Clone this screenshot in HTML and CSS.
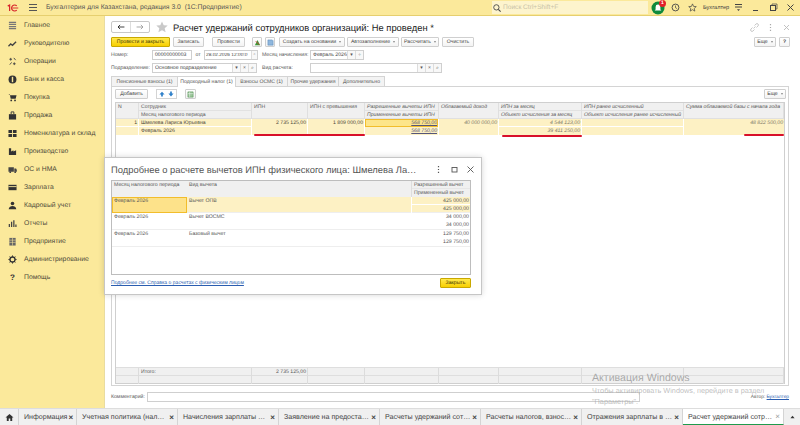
FILE: index.html
```html
<!DOCTYPE html>
<html lang="ru">
<head>
<meta charset="utf-8">
<title>Расчет удержаний сотрудников организаций</title>
<link rel="stylesheet" href="styles.css">
</head>
<body>
<div class="app">
  <header class="topbar">
    <svg class="logo" viewBox="0 0 20 12"><path d="M1 3.5 3.5 2V10" fill="none" stroke="#d8232a" stroke-width="1.6"/><path d="M13 3.2A4 4 0 1 0 13 8.8" fill="none" stroke="#d8232a" stroke-width="1.6"/><path d="M7 6H15" stroke="#d8232a" stroke-width="1.2"/></svg>
    <svg class="burger" viewBox="0 0 8 7"><path d="M0 .5H8M0 3.5H8M0 6.5H8" stroke="#555" stroke-width="1"/></svg>
    <div class="apptitle">Бухгалтерия для Казахстана, редакция 3.0  (1С:Предприятие)</div>
    <div class="search">
      <svg class="search-ico" viewBox="0 0 9 9"><circle cx="3.8" cy="3.8" r="3" fill="none" stroke="#444" stroke-width="1"/><path d="M6 6 8.6 8.6" stroke="#444" stroke-width="1.2"/></svg>
      <span>Поиск Ctrl+Shift+F</span>
    </div>
    <div class="bell">
      <svg viewBox="0 0 14 14"><circle cx="7" cy="7" r="6.5" fill="#0f8a3c"/><path d="M7 3.5a2.4 2.4 0 0 1 2.4 2.4V8.5l1 1H3.6l1-1V5.9A2.4 2.4 0 0 1 7 3.5Z" fill="#fff"/></svg>
      <span class="badge">1</span>
    </div>
    <svg class="tico hist" viewBox="0 0 10 10"><circle cx="5" cy="5" r="3.8" fill="none" stroke="#444"/><path d="M5 2.8V5.2L6.6 6.2" fill="none" stroke="#444" stroke-width=".8"/></svg>
    <svg class="tico star" viewBox="0 0 10 10"><path d="M5 1 6.2 3.8 9.2 4 6.9 6 7.6 9 5 7.4 2.4 9 3.1 6 .8 4 3.8 3.8Z" fill="none" stroke="#444" stroke-width=".8"/></svg>
    <div class="user">Бухгалтер</div>
    <svg class="tico menu" viewBox="0 0 9 9"><path d="M1 1.5H8M1 4H8" stroke="#444"/><path d="M3 6.2H6L4.5 8Z" fill="#444"/></svg>
    <svg class="tico wmin" viewBox="0 0 9 9"><path d="M2 7.5H7" stroke="#444"/></svg>
    <svg class="tico wmax" viewBox="0 0 9 9"><rect x="1.5" y="2.5" width="5" height="5" fill="none" stroke="#444"/><path d="M3 2V1H8V6H7" fill="none" stroke="#444" stroke-width=".7"/></svg>
    <svg class="tico wclose" viewBox="0 0 9 9"><path d="M1.5 1.5 7.5 7.5M7.5 1.5 1.5 7.5" stroke="#444" stroke-width="1"/></svg>
  </header>

  <div class="middle">
    <nav class="sidebar">
      <div class="nav-item"><svg viewBox="0 0 10 10"><path d="M1 1.5H9M1 3.8H9M1 6.2H9M1 8.5H9" stroke="#777" stroke-width="1.5"/></svg><span>Главное</span></div>
      <div class="nav-item"><svg viewBox="0 0 10 10"><path d="M.5 8 3 5.5 5 7 9 3" fill="none" stroke="#444" stroke-width="1.5"/></svg><span>Руководителю</span></div>
      <div class="nav-item"><svg viewBox="0 0 10 10"><path d="M3 1V4M1.5 2.5H4.5M7 6V9M5.5 7.5H8.5M2 8.5 4 6M6.5 1 8.5 3.5" stroke="#444" stroke-width="1"/></svg><span>Операции</span></div>
      <div class="nav-item"><svg viewBox="0 0 10 10"><circle cx="5" cy="5" r="4.4" fill="#333"/><path d="M5 2V8" stroke="#fbe99b" stroke-width="1.6"/></svg><span>Банк и касса</span></div>
      <div class="nav-item"><svg viewBox="0 0 10 10"><path d="M.5 1.5H2L3 6.5H8.5L9.5 2.5H2.4Z" fill="#333"/><circle cx="3.6" cy="8.3" r="1" fill="#333"/><circle cx="7.8" cy="8.3" r="1" fill="#333"/></svg><span>Покупка</span></div>
      <div class="nav-item"><svg viewBox="0 0 10 10"><path d="M1 3.5H9V9.5H1Z" fill="#333"/><path d="M3.5 3.5V1H6.5V3.5" fill="none" stroke="#333"/></svg><span>Продажа</span></div>
      <div class="nav-item"><svg viewBox="0 0 10 10"><path d="M.5 1H4.5V4.5H.5ZM5.5 1H9.5V4.5H5.5ZM.5 5.5H4.5V9H.5ZM5.5 5.5H9.5V9H5.5Z" fill="#333"/></svg><span>Номенклатура и склад</span></div>
      <div class="nav-item"><svg viewBox="0 0 10 10"><path d="M1 9V1.5H3.5V5L6 3.5V5L9 3.5V9Z" fill="#333"/></svg><span>Производство</span></div>
      <div class="nav-item"><svg viewBox="0 0 10 10"><path d="M.5 2.5H6.5V7.5H.5ZM7 4H9L9.8 5.5V7.5H7Z" fill="#444"/><circle cx="2.5" cy="8" r="1" fill="#444"/><circle cx="8" cy="8" r="1" fill="#444"/></svg><span>ОС и НМА</span></div>
      <div class="nav-item"><svg viewBox="0 0 10 10"><path d="M.5 2H9.5V8H.5Z" fill="#333"/><path d="M.5 4H9.5" stroke="#fbe99b" stroke-width="1"/></svg><span>Зарплата</span></div>
      <div class="nav-item"><svg viewBox="0 0 10 10"><circle cx="5" cy="2.8" r="2" fill="#333"/><path d="M.8 9.3C1 6.5 3 5.5 5 5.5S9 6.5 9.2 9.3Z" fill="#333"/></svg><span>Кадровый учет</span></div>
      <div class="nav-item"><svg viewBox="0 0 10 10"><path d="M1.5 9V5.5M4 9V3M6.5 9V1.5M8.8 9V6" stroke="#444" stroke-width="1.4"/></svg><span>Отчеты</span></div>
      <div class="nav-item"><svg viewBox="0 0 10 10"><path d="M1.5 1H8.5V9.5H1.5Z" fill="#666"/><path d="M5 1V9.5M1.5 3.5H8.5M1.5 6H8.5" stroke="#fbe99b" stroke-width=".6"/></svg><span>Предприятие</span></div>
      <div class="nav-item"><svg viewBox="0 0 10 10"><circle cx="5" cy="5" r="2.8" fill="none" stroke="#333" stroke-width="1.5"/><path d="M5 .5V2M5 8V9.5M.5 5H2M8 5H9.5M1.8 1.8 2.9 2.9M7.1 7.1 8.2 8.2M8.2 1.8 7.1 2.9M2.9 7.1 1.8 8.2" stroke="#333" stroke-width="1.1"/></svg><span>Администрирование</span></div>
      <div class="nav-item"><span class="qmark">?</span><span>Помощь</span></div>
    </nav>

    <main class="main">
      <div class="docbar">
        <div class="navbtns">
          <button class="navbtn"><svg viewBox="0 0 9 7"><path d="M8.5 3.5H1M3.5 1 1 3.5 3.5 6" fill="none" stroke="#222" stroke-width="1"/></svg></button>
          <button class="navbtn"><svg viewBox="0 0 9 7"><path d="M.5 3.5H8M5.5 1 8 3.5 5.5 6" fill="none" stroke="#999" stroke-width="1"/></svg></button>
        </div>
        <svg class="bigstar" viewBox="0 0 12 12"><path d="M6 .5 7.7 4.2 11.7 4.6 8.7 7.3 9.6 11.3 6 9.2 2.4 11.3 3.3 7.3.3 4.6 4.3 4.2Z" fill="#c9c9c9"/></svg>
        <h1 class="doctitle">Расчет удержаний сотрудников организаций: Не проведен *</h1>
        <div class="docactions">
          <svg viewBox="0 0 9 9"><path d="M3.5 5.5 5.5 3.5M2.5 4.5 1 6a1.4 1.4 0 0 0 2 2L4.5 6.5M6.5 4.5 8 3A1.4 1.4 0 0 0 6 1L4.5 2.5" fill="none" stroke="#bbb" stroke-width=".8"/></svg>
          <svg viewBox="0 0 9 9"><path d="M4.5 1V2.2M4.5 3.9V5.1M4.5 6.8V8" stroke="#aaa" stroke-width="1.2"/></svg>
          <svg viewBox="0 0 9 9"><path d="M2 2 7 7M7 2 2 7" stroke="#bbb" stroke-width=".9"/></svg>
        </div>
      </div>

      <div class="toolbar">
        <button class="btn primary w-post">Провести и закрыть</button>
        <button class="btn w-save">Записать</button>
        <button class="btn w-run">Провести</button>
        <button class="btn icon"><svg viewBox="0 0 8 8"><path d="M1 7 4 1 7 7Z" fill="#3a9a3a"/><path d="M2 2.5 6 6.5" stroke="#d33" stroke-width="1"/></svg></button>
        <button class="btn icon"><svg viewBox="0 0 8 8"><path d="M1 1H6L7 2V7H1Z" fill="#8fb7dd" stroke="#4a7fb0" stroke-width=".5"/></svg></button>
        <button class="btn w-create">Создать на основании<i class="car"></i></button>
        <button class="btn w-auto">Автозаполнение<i class="car"></i></button>
        <button class="btn w-calc">Рассчитать<i class="car"></i></button>
        <button class="btn w-clear">Очистить</button>
        <div class="spacer"></div>
        <button class="btn w-more">Еще<i class="car"></i></button>
        <button class="btn w-help">?</button>
      </div>

      <div class="formrow">
        <label class="lbl w-l1">Номер:</label>
        <div class="inp w-num">00000000003</div>
        <label class="lbl w-ot">от</label>
        <div class="inp w-date"><span class="grow">28.02.2026 12:00:0</span><i class="seg">▫</i></div>
        <label class="lbl w-l2">Месяц начисления:</label>
        <div class="inp w-month"><span class="grow">Февраль 2026</span><i class="seg">▾</i><i class="seg">÷</i></div>
      </div>
      <div class="formrow">
        <label class="lbl w-l1">Подразделение:</label>
        <div class="inp w-dep"><span class="grow">Основное подразделение</span><i class="seg">▾</i><i class="seg">×</i><i class="seg">⌕</i></div>
        <label class="lbl w-l3">Вид расчета:</label>
        <div class="inp w-kind"><span class="grow"></span><i class="seg">▾</i><i class="seg">×</i><i class="seg">⌕</i></div>
      </div>

      <div class="tabs">
        <div class="tab t1">Пенсионные взносы (1)</div>
        <div class="tab t2 active">Подоходный налог (1)</div>
        <div class="tab t3">Взносы ОСМС (1)</div>
        <div class="tab t4">Прочие удержания</div>
        <div class="tab t5">Дополнительно</div>
      </div>

      <section class="panel">
        <div class="cmdbar">
          <button class="btn w-add">Добавить</button>
          <div class="updown">
            <svg viewBox="0 0 7 7"><path d="M3.5 1 6.5 4H4.5V6.5H2.5V4H.5Z" fill="#2d7fc9"/></svg>
            <svg viewBox="0 0 7 7"><path d="M3.5 6.5 6.5 3H4.5V.5H2.5V3H.5Z" fill="#2d7fc9"/></svg>
          </div>
          <button class="btn icon xl"><svg viewBox="0 0 8 8"><path d="M1 1H7V7H1Z" fill="#9bc59b" stroke="#4f8f4f" stroke-width=".6"/><path d="M3 1V7M1 3H7" stroke="#fff" stroke-width=".5"/></svg></button>
          <div class="spacer"></div>
          <button class="btn w-more2">Еще<i class="car"></i></button>
        </div>

        <div class="table">
          <div class="tr thead">
            <div class="td"><div class="ln">N</div><div class="ln"></div></div>
            <div class="td"><div class="ln">Сотрудник</div><div class="ln">Месяц налогового периода</div></div>
            <div class="td"><div class="ln">ИПН</div><div class="ln"></div></div>
            <div class="td"><div class="ln">ИПН с превышения</div><div class="ln"></div></div>
            <div class="td it"><div class="ln">Разрешенные вычеты ИПН</div><div class="ln">Примененные вычеты ИПН</div></div>
            <div class="td it"><div class="ln">Облагаемый доход</div><div class="ln"></div></div>
            <div class="td it"><div class="ln">ИПН за месяц</div><div class="ln">Объект исчисления за месяц</div></div>
            <div class="td it"><div class="ln">ИПН ранее исчисленный</div><div class="ln">Объект исчисления ранее исчисленный</div></div>
            <div class="td it"><div class="ln">Сумма облагаемой базы с начала года</div><div class="ln"></div></div>
          </div>
          <div class="tr tsel">
            <div class="td r"><div class="ln">1</div><div class="ln"></div></div>
            <div class="td"><div class="ln">Шмелева Лариса Юрьевна</div><div class="ln">Февраль 2026</div></div>
            <div class="td r"><div class="ln">2 735 125,00</div><div class="ln"></div></div>
            <div class="td r"><div class="ln">1 809 000,00</div><div class="ln"></div></div>
            <div class="td r it lnk"><div class="ln cur">568 750,00</div><div class="ln">568 750,00</div></div>
            <div class="td r it soft"><div class="ln">40 000 000,00</div><div class="ln"></div></div>
            <div class="td r it"><div class="ln">4 544 123,00</div><div class="ln">39 411 250,00</div></div>
            <div class="td r it"><div class="ln"></div><div class="ln"></div></div>
            <div class="td r it"><div class="ln">48 822 500,00</div><div class="ln"></div></div>
          </div>
          <div class="tbody-fill"></div>
          <div class="tr tfoot">
            <div class="td"><div class="ln"></div><div class="ln"></div></div>
            <div class="td"><div class="ln">Итого:</div><div class="ln"></div></div>
            <div class="td r"><div class="ln">2 735 125,00</div><div class="ln"></div></div>
            <div class="td"><div class="ln"></div><div class="ln"></div></div>
            <div class="td"><div class="ln"></div><div class="ln"></div></div>
            <div class="td"><div class="ln"></div><div class="ln"></div></div>
            <div class="td"><div class="ln"></div><div class="ln"></div></div>
            <div class="td"><div class="ln"></div><div class="ln"></div></div>
            <div class="td"><div class="ln"></div><div class="ln"></div></div>
          </div>
        </div>
      </section>

      <div class="commentrow">
        <label class="lbl w-cm">Комментарий:</label>
        <div class="inp w-comment"></div>
        <div class="spacer"></div>
        <div class="author">Автор: <a>Бухгалтер</a></div>
      </div>
    </main>
  </div>

  <footer class="bottom">
    <div class="btab home"><svg viewBox="0 0 9 9"><path d="M4.5 1 8.5 4.6H7.2V8H5.3V5.6H3.7V8H1.8V4.6H.5Z" fill="#333"/></svg></div>
    <div class="btab b1"><span>Информация</span><b>×</b></div>
    <div class="btab b2"><span>Учетная политика (нал…</span><b>×</b></div>
    <div class="btab b2"><span>Начисления зарплаты …</span><b>×</b></div>
    <div class="btab b2"><span>Заявление на предоста…</span><b>×</b></div>
    <div class="btab b2"><span>Расчеты удержаний сот…</span><b>×</b></div>
    <div class="btab b2"><span>Расчеты налогов, взнос…</span><b>×</b></div>
    <div class="btab b2"><span>Отражения зарплаты в …</span><b>×</b></div>
    <div class="btab b2 active"><span>Расчет удержаний сотр…</span><b>×</b></div>
    <div class="btab up"><svg viewBox="0 0 6 4"><path d="M3 .5 5.5 3.5H.5Z" fill="#333"/></svg></div>
  </footer>

  <div class="redline r1"></div>
  <div class="redline r2"></div>
  <div class="redline r3"></div>

  <div class="dialog">
    <div class="dlg-head">
      <div class="dlg-title">Подробнее о расчете вычетов ИПН физического лица: Шмелева Ла…</div>
      <svg viewBox="0 0 9 9"><path d="M4.5 1V2.2M4.5 3.9V5.1M4.5 6.8V8" stroke="#555" stroke-width="1.2"/></svg>
      <svg viewBox="0 0 9 9"><rect x="2" y="2.5" width="5" height="4.5" fill="none" stroke="#555" stroke-width=".9"/></svg>
      <svg viewBox="0 0 9 9"><path d="M1.5 1.5 7.5 7.5M7.5 1.5 1.5 7.5" stroke="#555" stroke-width=".9"/></svg>
    </div>
    <div class="dlg-table">
      <div class="dr dh">
        <div class="dc"><div class="ln">Месяц налогового периода</div></div>
        <div class="dc"><div class="ln">Вид вычета</div></div>
        <div class="dc"><div class="ln hl">Разрешенный вычет</div><div class="ln">Примененный вычет</div></div>
      </div>
      <div class="dr dsel">
        <div class="dc cursor"><div class="ln">Февраль 2026</div></div>
        <div class="dc"><div class="ln">Вычет ОПВ</div></div>
        <div class="dc r"><div class="ln hl">425 000,00</div><div class="ln">425 000,00</div></div>
      </div>
      <div class="dr">
        <div class="dc"><div class="ln">Февраль 2026</div></div>
        <div class="dc"><div class="ln">Вычет ВОСМС</div></div>
        <div class="dc r"><div class="ln">34 000,00</div><div class="ln">34 000,00</div></div>
      </div>
      <div class="dr">
        <div class="dc"><div class="ln">Февраль 2026</div></div>
        <div class="dc"><div class="ln">Базовый вычет</div></div>
        <div class="dc r"><div class="ln">129 750,00</div><div class="ln">129 750,00</div></div>
      </div>
    </div>
    <div class="dlg-foot">
      <a class="dlg-link">Подробнее см. Справка о расчетах с физическим лицом</a>
      <button class="btn primary w-close">Закрыть</button>
    </div>
  </div>

  <div class="watermark">
    <div class="wm1">Активация Windows</div>
    <div class="wm2">Чтобы активировать Windows, перейдите в раздел<br>"Параметры".</div>
  </div>
</div>
</body>
</html>
```

FILE: styles.css
```css
* { box-sizing: border-box; }
html, body { margin: 0; padding: 0; background: #fff; }
html { text-rendering: geometricPrecision; }
body { font-family: "Liberation Sans", Arial, sans-serif; color: #444; }
svg { display: block; flex: none; }
button { font-family: inherit; margin: 0; text-rendering: geometricPrecision; }

.app { position: relative; width: 800px; height: 425px; display: flex; flex-direction: column; overflow: hidden; }

/* top bar */
.topbar { height: 16px; flex: none; display: flex; align-items: center; background: #fbe99b; border-bottom: 1px solid #e6cf6f; }
.logo { width: 15px; height: 10px; margin-left: 7px; }
.burger { width: 8px; height: 7px; margin-left: 7px; }
.apptitle { margin-left: 9px; font-size: 6.8px; color: #555; white-space: pre; width: 446px; }
.search { width: 156px; height: 13px; background: #fdf4cd; display: flex; align-items: center; font-size: 6.6px; color: #c9c3a8; }
.search-ico { width: 8px; height: 8px; margin: 0 2px 0 1px; }
.bell { position: relative; width: 14px; height: 14px; margin-left: 3px; }
.bell svg { width: 14px; height: 14px; }
.badge { position: absolute; right: -1px; top: -1px; width: 7px; height: 7px; border-radius: 50%; background: #e3202a; color: #fff; font-size: 5px; font-weight: bold; text-align: center; line-height: 7px; }
.tico { width: 9px; height: 9px; }
.hist { margin-left: 6px; }
.star { margin-left: 8px; }
.user { margin-left: 6px; width: 30px; font-size: 5.6px; color: #444; }
.menu { margin-left: 1px; }
.wmin { margin-left: 8px; }
.wmax { margin-left: 9px; }
.wclose { margin-left: 8px; }

.middle { flex: 1; min-height: 0; display: flex; }

/* sidebar */
.sidebar { width: 105px; flex: none; background: #fbe99b; border-right: 1px solid #e9dca0; }
.nav-item { height: 18px; display: flex; align-items: center; padding-left: 8px; font-size: 6.8px; color: #4d4a3a; }
.nav-item svg { width: 9px; height: 9px; margin-right: 7px; }
.qmark { width: 9px; margin-right: 7px; text-align: center; font-weight: bold; font-size: 8px; color: #333; }

/* main */
.main { flex: 1; min-width: 0; display: flex; flex-direction: column; padding: 5px 11px 0 6px; background: #fff; }
.docbar { height: 12px; display: flex; align-items: center; flex: none; }
.navbtns { display: flex; width: 39px; height: 12px; border: 1px solid #c8c8c8; border-radius: 2px; background: #fff; }
.navbtn { flex: 1; padding: 0; border: 0; background: transparent; display: flex; align-items: center; justify-content: center; }
.navbtn + .navbtn { border-left: 1px solid #ddd; }
.navbtn svg { width: 8px; height: 6px; }
.bigstar { width: 12px; height: 12px; margin-left: 6px; }
.doctitle { margin: 0 0 0 5px; font-size: 9.4px; font-weight: normal; color: #222; white-space: nowrap; flex: 1; }
.docactions { display: flex; gap: 7px; margin-right: -2px; }
.docactions svg { width: 9px; height: 9px; }

.toolbar { margin-top: 4px; height: 10px; display: flex; flex: none; align-items: stretch; }
.btn { padding: 0; font-size: 5.15px; color: #444; height: 10px; background: linear-gradient(#fff, #f3f3f3); border: 1px solid #cfcfcf; border-radius: 1px; display: flex; align-items: center; justify-content: center; white-space: nowrap; flex: none; }
.btn.primary { background: linear-gradient(#ffe94d, #f8cf00); border-color: #c9a800; color: #3d3200; }
.car { display: inline-block; margin-left: 3px; width: 0; height: 0; border: 1px solid transparent; border-top: 2px solid #888; border-bottom: 0; }
.icon { width: 10px; margin-left: 3px; }
.icon svg { width: 7px; height: 7px; }
.w-post { width: 59px; }
.w-save { width: 31px; margin-left: 3px; }
.w-run { width: 33px; margin-left: 8px; }
.toolbar .icon:nth-child(4) { margin-left: 7px; }
.w-create { width: 66px; margin-left: 4px; }
.w-auto { width: 52px; margin-left: 2px; }
.w-calc { width: 38px; margin-left: 2px; }
.w-clear { width: 32px; margin-left: 3px; }
.spacer { flex: 1; }
.w-more { width: 22px; }
.w-help { width: 11px; margin-left: 3px; margin-right: -1px; font-weight: bold; }

.formrow { margin-top: 3px; height: 10px; display: flex; align-items: stretch; flex: none; }
.lbl { font-size: 5.15px; color: #555; display: flex; align-items: center; white-space: nowrap; flex: none; }
.inp { font-size: 5.15px; color: #444; border: 1px solid #cfcfcf; background: #fff; display: flex; align-items: center; padding-left: 2px; white-space: nowrap; overflow: hidden; flex: none; }
.grow { flex: 1; overflow: hidden; }
.seg { width: 8px; height: 100%; border-left: 1px solid #ddd; font-style: normal; font-size: 5px; color: #555; display: flex; align-items: center; justify-content: center; background: #f8f8f8; flex: none; }
.w-l1 { width: 41px; }
.w-num { width: 40px; }
.w-ot { width: 12px; justify-content: center; }
.w-date { width: 54px; font-size: 4.8px; padding-left: 1px; }
.w-date .seg { width: 6px; }
.w-l2 { width: 52px; padding-left: 4px; }
.w-month { width: 54px; }
.w-dep { width: 105px; }
.w-l3 { width: 53px; padding-left: 5px; }
.w-kind { width: 132px; }

.tabs { margin-top: 3px; height: 11px; display: flex; flex: none; align-items: stretch; }
.tab { font-size: 5.15px; color: #555; background: #f3f3f3; border: 1px solid #d4d4d4; border-bottom: 0; display: flex; align-items: center; justify-content: center; white-space: nowrap; margin-right: -1px; }
.tab.active { background: #fff; border-bottom: 0; position: relative; z-index: 1; }
.t1 { width: 67px; }
.t2 { width: 59px; }
.t3 { width: 53px; }
.t4 { width: 52px; }
.t5 { width: 47px; }

.panel { flex: 1; min-height: 0; margin-top: -1px; border: 1px solid #d4d4d4; padding: 2px 3px 1px 3px; display: flex; flex-direction: column; }
.cmdbar { height: 10px; display: flex; flex: none; margin-bottom: 3px; }
.w-add { width: 33px; }
.updown { margin-left: 8px; width: 21px; height: 10px; border: 1px solid #d4d4d4; display: flex; align-items: center; justify-content: center; gap: 3px; }
.updown svg { width: 6px; height: 6px; }
.xl { margin-left: 8px; width: 11px; }
.w-more2 { width: 22px; margin-right: -1px; }

.table { flex: 1; min-height: 0; border: 1px solid #cfcfcf; display: flex; flex-direction: column; }
.tr { display: grid; grid-template-columns: 23px 113px 56px 57px 74px 60px 83px 102px 100px; flex: none; }
.td { border-right: 1px solid #fff; min-width: 0; }
.td:last-child { border-right: 0; }
.ln { height: 8px; font-size: 5.15px; line-height: 8px; padding: 0 1px 0 2px; white-space: nowrap; overflow: hidden; color: #555; border-bottom: 1px solid transparent; }
.thead { height: 16px; background: #f0f0f0; border-bottom: 1px solid #e0e0e0; }
.thead .td { border-right: 1px solid #dfdfdf; }
.thead .ln:first-child { border-bottom-color: #e2e2e2; }
.thead .td:nth-child(1) .ln:first-child,
.thead .td:nth-child(3) .ln:first-child,
.thead .td:nth-child(4) .ln:first-child,
.thead .td:nth-child(6) .ln:first-child,
.thead .td:nth-child(9) .ln:first-child { border-bottom-color: transparent; }
.it .ln { font-style: italic; }
.r .ln { text-align: right; }
.tsel { background: #fdf1c4; height: 16px; }
.tsel .ln { color: #4a4637; }
.tsel .td:nth-child(-n+2) .ln:first-child { border-bottom-color: #fff; }
.tsel .td:nth-child(5) .ln:first-child, .tsel .td:nth-child(7) .ln:first-child, .tsel .td:nth-child(8) .ln:first-child { border-bottom-color: #fff; }
.soft .ln, .tsel .it .ln { color: #7d7a6a; }
.tsel .lnk .ln { text-decoration: underline; color: #55557a; }
.cur { background: #fde58a; outline: 1px solid #f2bd2b; outline-offset: -1px; }
.tbody-fill { flex: 1; }
.tfoot { height: 16px; background: #f0f0f0; border-top: 1px solid #dedede; }
.tfoot .td { border-right: 1px solid #dcdcdc; }
.tfoot .ln:first-child { border-bottom-color: #dedede; }

.commentrow { height: 22px; flex: none; display: flex; align-items: flex-start; padding-top: 6px; }
.w-cm { width: 36px; height: 10px; }
.w-comment { width: 493px; height: 10px; }
.author { font-size: 4.8px; color: #555; margin-top: 3px; }
.author a { color: #2a5db0; text-decoration: underline; }

/* bottom tabs */
.bottom { height: 17px; flex: none; display: flex; background: #f0f0f0; border-top: 1px solid #ddd; }
.btab { display: flex; align-items: center; font-size: 7.1px; color: #444; border-right: 1px solid #d4d4d4; padding: 0 3px 0 5px; white-space: nowrap; flex: none; }
.btab span { flex: 1; }
.btab b { font-size: 8px; font-weight: bold; color: #444; margin-left: 1px; }
.home { width: 19px; justify-content: center; padding: 0; }
.home svg { width: 9px; height: 9px; }
.b1 { width: 58px; }
.b2 { width: 101px; }
.btab.active { background: #fff; border-bottom: 1px solid #1f9b4d; }
.btab.active b { color: #999; font-weight: normal; }
.up { flex: 1; border-right: 0; justify-content: center; padding: 0; }
.up svg { width: 5px; height: 4px; }

/* annotations */
.redline { position: absolute; height: 2px; background: #d8102a; border-radius: 1px; }
.r1 { left: 254px; top: 134px; width: 111px; }
.r2 { left: 502px; top: 135px; width: 80px; }
.r3 { left: 744px; top: 134px; width: 40px; }

/* dialog */
.dialog { position: absolute; left: 104px; top: 157px; width: 378px; height: 138px; background: #fff; border: 1px solid #c6c6c6; box-shadow: 0 0 6px rgba(0,0,0,.16); padding: 0 10px 0 6px; display: flex; flex-direction: column; }
.dlg-head { height: 22px; display: flex; align-items: center; flex: none; }
.dlg-title { width: 312px; flex: none; font-size: 9.4px; color: #555; white-space: nowrap; margin-right: 11px; }
.dlg-head svg { width: 9px; height: 9px; margin-left: 7px; }
.dlg-head svg:first-of-type { margin-left: 0; }
.dlg-table { height: 95px; flex: none; border: 1px solid #bdbdbd; }
.dr { display: grid; grid-template-columns: 75px 224px 59px; height: 17px; border-bottom: 1px solid #eee; }
.dh { height: 16px; background: #f0f0f0; border-bottom: 0; }
.dsel { height: 16px; }
.dc { min-width: 0; }
.dc .ln { font-size: 5.2px; }
.dh .dc:last-child { border-left: 1px solid #ddd; }
.hl { border-bottom-color: #e6e6e6; }
.dsel { background: #fdf1c4; }
.dsel .hl { border-bottom-color: #fff; }
.dsel .dc:last-child { border-left: 1px solid #fff; }
.cursor { background: #fde28a; outline: 1px solid #f2bd2b; outline-offset: -1px; }
.dlg-foot { flex: 1; display: flex; align-items: flex-start; justify-content: space-between; padding-top: 3px; }
.dlg-link { font-size: 5.05px; color: #2a5db0; text-decoration: underline; margin-top: 2px; }
.w-close { width: 31px; height: 10px; }

/* watermark */
.watermark { position: absolute; left: 592px; top: 372px; color: rgba(150,150,150,.8); pointer-events: none; }
.wm1 { font-size: 10.6px; line-height: 13px; }
.wm2 { font-size: 7.3px; line-height: 11px; white-space: nowrap; color: rgba(170,170,170,.75); }
```
